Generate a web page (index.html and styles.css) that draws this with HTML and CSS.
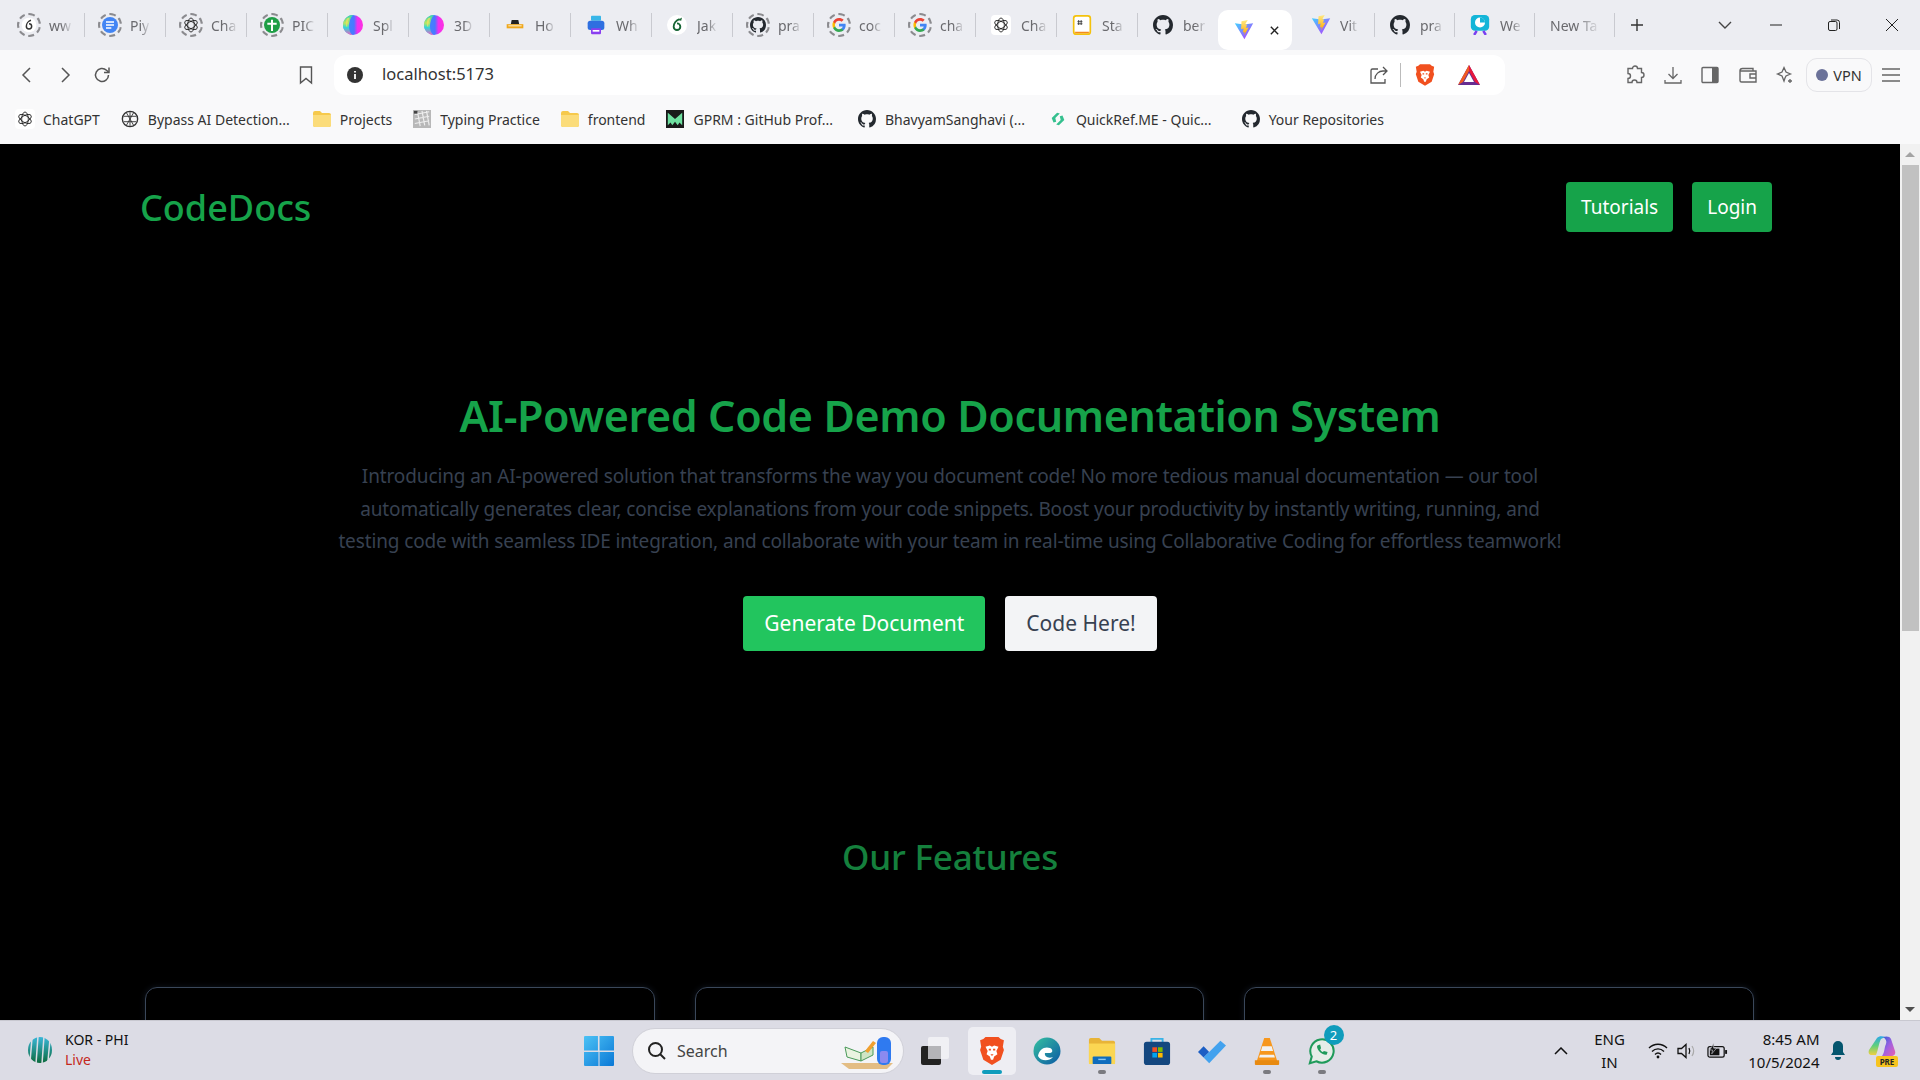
FILE: index.html
```html
<!DOCTYPE html>
<html lang="en">
<head>
    <meta charset="UTF-8">
    <title>CodeDocs</title>
    <link rel="stylesheet" href="styles.css">
</head>
<body>
    <!-- icon set -->
    <svg class="defs" width="0" height="0">
        <defs>
            <linearGradient id="viteBody" x1="0" y1="0" x2="1" y2="1"><stop offset="0" stop-color="#41d1ff"/><stop offset="1" stop-color="#bd34fe"/></linearGradient>
            <linearGradient id="viteBolt" x1="0" y1="0" x2="0" y2="1"><stop offset="0" stop-color="#ffea83"/><stop offset="1" stop-color="#ffa800"/></linearGradient>
            <linearGradient id="ballBase" x1="0" y1="0" x2="1" y2="0"><stop offset="0" stop-color="#3a8cff"/><stop offset=".55" stop-color="#4a78ff"/><stop offset=".72" stop-color="#f030f0"/><stop offset="1" stop-color="#ff30e0"/></linearGradient>
            <linearGradient id="ballLeft" x1="0" y1="0" x2="0" y2="1"><stop offset="0" stop-color="#30d8b0"/><stop offset=".4" stop-color="#b8e860"/><stop offset=".62" stop-color="#30d8d8"/><stop offset="1" stop-color="#f060c0"/></linearGradient>
            <linearGradient id="iccBall" x1="0" y1="0" x2="0" y2="1"><stop offset="0" stop-color="#39b6d8"/><stop offset="1" stop-color="#0c6b3e"/></linearGradient>
            <linearGradient id="winTile" x1="0" y1="0" x2="1" y2="1"><stop offset="0" stop-color="#4cc2f5"/><stop offset="1" stop-color="#0a78d6"/></linearGradient>
            <linearGradient id="edgeRing" x1="0" y1="0" x2="1" y2="1"><stop offset="0" stop-color="#35c1a0"/><stop offset="1" stop-color="#0c59a4"/></linearGradient>
            <linearGradient id="copLeft" x1="0" y1="0" x2="0" y2="1"><stop offset="0" stop-color="#2aa8e8"/><stop offset=".5" stop-color="#5fd07a"/><stop offset="1" stop-color="#f0d040"/></linearGradient>
            <linearGradient id="copRight" x1="0" y1="0" x2="1" y2="1"><stop offset="0" stop-color="#2a5fd8"/><stop offset=".5" stop-color="#a060e0"/><stop offset="1" stop-color="#e860b0"/></linearGradient>
            <symbol id="i-gh" viewBox="0 0 16 16"><path fill="#24292f" d="M8 0C3.58 0 0 3.58 0 8c0 3.54 2.29 6.53 5.47 7.59.4.07.55-.17.55-.38 0-.19-.01-.82-.01-1.49-2.01.37-2.53-.49-2.69-.94-.09-.23-.48-.94-.82-1.13-.28-.15-.68-.52-.01-.53.63-.01 1.08.58 1.23.82.72 1.21 1.87.87 2.33.66.07-.52.28-.87.51-1.07-1.78-.2-3.64-.89-3.64-3.95 0-.87.31-1.59.82-2.15-.08-.2-.36-1.02.08-2.12 0 0 .67-.21 2.2.82.64-.18 1.32-.27 2-.27s1.36.09 2 .27c1.53-1.04 2.2-.82 2.2-.82.44 1.1.16 1.92.08 2.12.51.56.82 1.27.82 2.15 0 3.07-1.87 3.75-3.65 3.95.29.25.54.73.54 1.48 0 1.07-.01 1.93-.01 2.2 0 .21.15.46.55.38A8.01 8.01 0 0 0 16 8c0-4.42-3.58-8-8-8z"/></symbol>
            <symbol id="i-g" viewBox="0 0 24 24"><path fill="#4285f4" d="M22 12.2c0-.7-.1-1.400-.2-2H12v3.900h5.600c-.2 1.300-1 2.400-2.100 3.100v2.600h3.400c2-1.800 3.100-4.500 3.100-7.600z"/><path fill="#34a853" d="M12 22.500c2.800 0 5.200-.9 6.900-2.600l-3.400-2.600c-.9.600-2.100 1-3.500 1-2.700 0-5-1.800-5.800-4.300H3.200v2.700c1.700 3.500 5.100 5.800 8.800 5.800z"/><path fill="#fbbc05" d="M6.200 14c-.4-1.300-.4-2.700 0-4V7.300H3.200c-1.400 2.800-1.400 6.600 0 9.400z"/><path fill="#ea4335" d="M12 5.700c1.500 0 2.900.5 4 1.500l3-3C17.200 2.500 14.700 1.500 12 1.500c-3.700 0-7.100 2.300-8.800 5.800l3 2.700c.8-2.500 3.100-4.300 5.800-4.300z"/></symbol>
            <symbol id="i-oai" viewBox="0 0 24 24"><g fill="none" stroke="#222" stroke-width="1.300"><ellipse cx="12" cy="12" rx="5" ry="10.500"/><ellipse cx="12" cy="12" rx="5" ry="10.500" transform="rotate(60 12 12)"/><ellipse cx="12" cy="12" rx="5" ry="10.500" transform="rotate(120 12 12)"/></g></symbol>
            <symbol id="i-vite" viewBox="0 0 24 24"><path fill="url(#viteBody)" d="M1 4l11 1.500L23 4 12.500 23z"/><path fill="url(#viteBolt)" d="M16.500 0L9 1.500 8.500 11l3-.7-.8 4.700 2.200-.6-.7 4 5.300-9.500-3 .6 1.100-4.500-2.300.4z"/></symbol>
            <symbol id="i-ball" viewBox="0 0 24 24"><circle cx="12" cy="12" r="12" fill="url(#ballBase)"/><path fill="url(#ballLeft)" d="M12 0C5.400 0 0 5.400 0 12s5 11.500 11 12C6 19 5.500 7 12 0z"/><path fill="#f8e060" opacity=".7" d="M5 4C2.500 8 3 13 5 15c0-4 1-8 3-12z"/></symbol>
            <symbol id="i-brave" viewBox="0 0 24 28"><path fill="#f1501f" d="M6 1h12l2 2 3 1-1 6 1 3-3 9-8 5-8-5-3-9 1-3-1-6 3-1z"/><path fill="#fff" d="M6 10l4-1 2 1 2-1 4 1-2 4 1 3-3 2-1 3h-2l-1-3-3-2 1-3z"/><path fill="#f1501f" d="M9 12h2v1.500H9zM13 12h2v1.500h-2zM10.500 17h3l-1.500 1.500z"/></symbol>
        </defs>
    </svg>

    <div class="tabstrip">
        <div class="tab"><span class="favicon ring"><svg class="glyph-s" viewBox="0 0 24 24"><circle cx="12" cy="12" r="11" fill="#fff"/><path d="M15 5c-4 1-7 5-7 9a4 4 0 1 0 4-4" fill="none" stroke="#333" stroke-width="2.200"/></svg></span><span class="tab-label">ww</span></div>
        <div class="tab"><span class="favicon ring"><svg class="glyph-s" viewBox="0 0 24 24"><circle cx="12" cy="12" r="12" fill="#4285f4"/><path d="M6 7.500h12M6 12h12M6 16.500h8" stroke="#fff" stroke-width="2"/></svg></span><span class="tab-label">Piy</span></div>
        <div class="tab"><span class="favicon ring"><svg class="glyph-s"><use href="#i-oai"/></svg></span><span class="tab-label">Cha</span></div>
        <div class="tab"><span class="favicon ring"><svg class="glyph-s" viewBox="0 0 24 24"><circle cx="12" cy="12" r="12" fill="#1e9e46"/><path d="M12 4v17M5 10h14" stroke="#fff" stroke-width="3"/></svg></span><span class="tab-label">PIC</span></div>
        <div class="tab"><span class="favicon"><svg class="glyph"><use href="#i-ball"/></svg></span><span class="tab-label">Spl</span></div>
        <div class="tab"><span class="favicon"><svg class="glyph"><use href="#i-ball"/></svg></span><span class="tab-label">3D</span></div>
        <div class="tab"><span class="favicon"><svg class="glyph" viewBox="0 0 24 24"><path d="M8 6h8l1 5H7z" fill="#222"/><path d="M2 11h20v5H2z" fill="#f0a81c"/><path d="M4 13h16" stroke="#fff" stroke-width="1"/></svg></span><span class="tab-label">Ho</span></div>
        <div class="tab"><span class="favicon"><svg class="glyph" viewBox="0 0 24 24"><rect x="6" y="1" width="12" height="6" rx="1" fill="#38b6e8"/><rect x="2" y="7" width="20" height="11" rx="3" fill="#2f6fe0"/><rect x="6" y="16" width="12" height="7" rx="1" fill="#8a3ff0"/><rect x="8" y="18" width="8" height="2" fill="#fff"/></svg></span><span class="tab-label">Wh</span></div>
        <div class="tab"><span class="favicon"><svg class="glyph" viewBox="0 0 24 24"><circle cx="12" cy="12" r="12" fill="#fff"/><path d="M15 5c-4 1-7 5-7 9a4 4 0 1 0 4-4" fill="none" stroke="#166534" stroke-width="2.200"/><path d="M13 6l5-3-1 4z" fill="#166534"/></svg></span><span class="tab-label">Jak</span></div>
        <div class="tab"><span class="favicon ring"><svg class="glyph-s"><use href="#i-gh"/></svg></span><span class="tab-label">pra</span></div>
        <div class="tab"><span class="favicon ring"><svg class="glyph-s"><use href="#i-g"/></svg></span><span class="tab-label">coc</span></div>
        <div class="tab"><span class="favicon ring"><svg class="glyph-s"><use href="#i-g"/></svg></span><span class="tab-label">cha</span></div>
        <div class="tab"><span class="favicon white"><svg><use href="#i-oai"/></svg></span><span class="tab-label">Cha</span></div>
        <div class="tab"><span class="favicon"><svg class="glyph" viewBox="0 0 24 24"><rect x="2" y="1" width="20" height="22" rx="3" fill="#fff" stroke="#f4c20d" stroke-width="2"/><path d="M3 20a3 3 0 0 0 2 2h14a3 3 0 0 0 2-2z" fill="#f48a1c"/><path d="M8 6v6M11 6v6M6.500 8h6M6.500 10.500h6" stroke="#333" stroke-width="1"/></svg></span><span class="tab-label">Sta</span></div>
        <div class="tab tab-last"><span class="favicon"><svg class="glyph"><use href="#i-gh"/></svg></span><span class="tab-label">ber</span></div>
        <div class="tab-active"><svg class="glyph"><use href="#i-vite"/></svg><svg class="tab-close" viewBox="0 0 12 12"><path d="M2 2l8 8M10 2l-8 8" stroke="#222" stroke-width="1.500"/></svg></div>
        <div class="tab tab-narrow"><span class="favicon"><svg class="glyph"><use href="#i-vite"/></svg></span><span class="tab-label">Vit</span></div>
        <div class="tab tab-narrow"><span class="favicon"><svg class="glyph"><use href="#i-gh"/></svg></span><span class="tab-label">pra</span></div>
        <div class="tab tab-narrow"><span class="favicon"><svg class="glyph" viewBox="0 0 24 24"><rect x="1" y="0" width="22" height="19" rx="5" fill="#13b5d8"/><circle cx="12" cy="9" r="6" fill="#fff"/><path d="M12 3v6h6a6 6 0 0 0-6-6z" fill="#13b5d8"/><path d="M8 19l-3 5M16 19l3 5" stroke="#7a3ff0" stroke-width="3"/></svg></span><span class="tab-label">We</span></div>
        <div class="tab tab-narrow tab-blank"><span class="tab-label">New Ta</span></div>
        <svg class="strip-plus" viewBox="0 0 14 14"><path d="M7 1v12M1 7h12" stroke="#333" stroke-width="1.400"/></svg>
        <svg class="strip-chevron" viewBox="0 0 14 8"><path d="M1 1l6 6 6-6" fill="none" stroke="#444" stroke-width="1.400"/></svg>
        <div class="win-controls">
            <svg viewBox="0 0 14 14"><path d="M1 7h12" stroke="#222"/></svg>
            <svg viewBox="0 0 14 14"><rect x="1.500" y="3.500" width="8.500" height="9" rx="1.500" fill="none" stroke="#222"/><path d="M4 2h6a2.500 2.500 0 0 1 2.500 2.500V11" fill="none" stroke="#222"/></svg>
            <svg viewBox="0 0 14 14"><path d="M1 1l12 12M13 1L1 13" stroke="#222"/></svg>
        </div>
    </div>

    <div class="toolbar">
        <svg class="tool tool-back" viewBox="0 0 20 20"><path d="M13 3l-7 7 7 7" fill="none" stroke="#555" stroke-width="1.500"/></svg>
        <svg class="tool tool-fwd" viewBox="0 0 20 20"><path d="M7 3l7 7-7 7" fill="none" stroke="#555" stroke-width="1.500"/></svg>
        <svg class="tool tool-reload" viewBox="0 0 20 20"><path d="M16.500 10a6.500 6.500 0 1 1-2-4.700L16.500 7" fill="none" stroke="#555" stroke-width="1.500"/><path d="M17 2.500V7.500h-5" fill="none" stroke="#555" stroke-width="1.500"/></svg>
        <svg class="tool tool-mark" viewBox="0 0 20 20"><path d="M4.500 2h11v16L10 13.500 4.500 18z" fill="none" stroke="#555" stroke-width="1.400"/></svg>
        <div class="address">
            <svg class="addr-info" viewBox="0 0 16 16"><circle cx="8" cy="8" r="8" fill="#333"/><path d="M8 7v5M8 4v1.600" stroke="#fff" stroke-width="1.800"/></svg>
            <span class="addr-url">localhost:5173</span>
            <svg class="addr-share" viewBox="0 0 20 20"><path d="M9 4H3.500A1.500 1.500 0 0 0 2 5.500V18h14v-4" fill="none" stroke="#555" stroke-width="1.300"/><path d="M6 14c0-5 4-8 8-8h4M14 2l4 4-4 4" fill="none" stroke="#555" stroke-width="1.300"/></svg>
            <span class="addr-sep"></span>
            <svg class="addr-brave"><use href="#i-brave"/></svg>
            <svg class="addr-bat" viewBox="0 0 24 22"><path d="M12 1L1 21h22z" fill="#662d91"/><path d="M12 1L1 21l5-3L12 7z" fill="#f15a22"/><path d="M12 1v6l6 11 5 3z" fill="#e8173c"/><path d="M12 9l-5 9h10z" fill="#fff"/></svg>
        </div>
        <div class="tool-group">
            <svg class="tool" viewBox="0 0 20 20"><path d="M7.500 3.500a2.500 2.500 0 0 1 5 0H16.500v4a2.500 2.500 0 0 1 0 5v5H12a2.500 2.500 0 0 0-5 0H3v-4a2.500 2.500 0 0 0 0-5v-5z" fill="none" stroke="#666" stroke-width="1.400"/></svg>
            <svg class="tool" viewBox="0 0 20 20"><path d="M10 2v11M5.500 9l4.500 4.500L14.500 9M2 15v3h16v-3" fill="none" stroke="#666" stroke-width="1.300"/></svg>
            <svg class="tool" viewBox="0 0 20 20"><rect x="2" y="2.500" width="16" height="15" rx="1" fill="none" stroke="#666" stroke-width="1.400"/><rect x="12" y="2.500" width="6" height="15" fill="#666"/></svg>
            <svg class="tool" viewBox="0 0 20 20"><path d="M2 6a2.500 2.500 0 0 1 2.500-2.500H15V6M2 6v9.500A1.500 1.500 0 0 0 3.500 17H18V6zM18 9h-6v4h6" fill="none" stroke="#666" stroke-width="1.400"/></svg>
            <svg class="tool" viewBox="0 0 20 20"><path d="M9 2.500l2 4.500 4.500 2-4.500 2-1 2-1 3-2-5-4.500-2L7 7zM15 14v4M13 16h4" fill="none" stroke="#666" stroke-width="1.300"/></svg>
        </div>
        <div class="vpn"><span class="vpn-dot"></span>VPN</div>
        <svg class="tool tool-menu" viewBox="0 0 20 20"><path d="M1 4h18M1 10h18M1 16h18" stroke="#666" stroke-width="1.300"/></svg>
    </div>

    <div class="bookmarks">
        <div class="bm bm-chat"><span class="bm-icon white"><svg><use href="#i-oai"/></svg></span>ChatGPT</div>
        <div class="bm bm-bypass"><span class="bm-icon"><svg viewBox="0 0 20 20"><circle cx="10" cy="10" r="8.500" fill="none" stroke="#333" stroke-width="1.500"/><path d="M10 2v16M3 7h14M3 13h14M6 3l8 14M14 3L6 17" stroke="#333"/></svg></span>Bypass AI Detection...</div>
        <div class="bm bm-projects"><span class="bm-icon"><svg class="folder" viewBox="0 0 20 18"><path d="M1 3a2 2 0 0 1 2-2h5l2 2h7a2 2 0 0 1 2 2v10a2 2 0 0 1-2 2H3a2 2 0 0 1-2-2z" fill="#f6c94c"/><path d="M1 5h18v10a2 2 0 0 1-2 2H3a2 2 0 0 1-2-2z" fill="#fbdc7a"/></svg></span>Projects</div>
        <div class="bm bm-typing"><span class="bm-icon"><svg viewBox="0 0 20 20"><rect width="20" height="20" fill="#b8b8b8"/><path d="M2 5l16-3M2 10l16-3M2 15l16-3M5 2l3 16M10 1l3 16M15 1l3 16" stroke="#eee" stroke-width="1.300"/><path d="M1 1h4v3H1z" fill="#444"/></svg></span>Typing Practice</div>
        <div class="bm bm-frontend"><span class="bm-icon"><svg class="folder" viewBox="0 0 20 18"><path d="M1 3a2 2 0 0 1 2-2h5l2 2h7a2 2 0 0 1 2 2v10a2 2 0 0 1-2 2H3a2 2 0 0 1-2-2z" fill="#f6c94c"/><path d="M1 5h18v10a2 2 0 0 1-2 2H3a2 2 0 0 1-2-2z" fill="#fbdc7a"/></svg></span>frontend</div>
        <div class="bm bm-gprm"><span class="bm-icon"><svg viewBox="0 0 20 20"><rect width="20" height="20" fill="#1a1a1a"/><path d="M2 3l8 7 8-7v14l-3-3-2 3-3-4-3 4-2-3-3 3z" fill="#6fe0a0"/></svg></span>GPRM : GitHub Prof...</div>
        <div class="bm bm-bhavyam"><span class="bm-icon"><svg><use href="#i-gh"/></svg></span>BhavyamSanghavi (...</div>
        <div class="bm bm-quick"><span class="bm-icon"><svg viewBox="0 0 20 20"><path d="M3 9l6-6 3 1-5 5 1 4-3 1zM17 11l-6 6-3-1 5-5-1-4 3-1z" fill="#35c08e"/></svg></span>QuickRef.ME - Quic...</div>
        <div class="bm bm-repos"><span class="bm-icon"><svg><use href="#i-gh"/></svg></span>Your Repositories</div>
    </div>

    <div class="viewport">
        <main class="page">
            <nav class="nav">
                <div class="logo">CodeDocs</div>
                <div class="nav-links">
                    <a class="nav-btn">Tutorials</a>
                    <a class="nav-btn">Login</a>
                </div>
            </nav>

            <section class="hero">
                <h1>AI-Powered Code Demo Documentation System</h1>
                <p>Introducing an AI-powered solution that transforms the way you document code! No more tedious manual documentation — our tool<br>automatically generates clear, concise explanations from your code snippets. Boost your productivity by instantly writing, running, and<br>testing code with seamless IDE integration, and collaborate with your team in real-time using Collaborative Coding for effortless teamwork!</p>
                <div class="hero-actions">
                    <a class="btn btn-green">Generate Document</a>
                    <a class="btn btn-light">Code Here!</a>
                </div>
            </section>

            <section class="features">
                <h2>Our Features</h2>
                <div class="feature-grid">
                    <div class="feature-card"></div>
                    <div class="feature-card"></div>
                    <div class="feature-card"></div>
                </div>
            </section>
        </main>
        <div class="scrollbar">
            <span class="arrow-up"></span>
            <div class="thumb"></div>
            <span class="arrow-down"></span>
        </div>
    </div>

    <footer class="taskbar">
        <div class="widget">
            <svg class="widget-icon" viewBox="0 0 28 32"><ellipse cx="14" cy="16" rx="12" ry="13" fill="url(#iccBall)"/><path d="M6 4l-2 24M12 2l-2 28M18 2l-2 28M24 5l-2 22" stroke="#dcdce5" stroke-width="1.500"/></svg>
            <div class="widget-text">
                <span>KOR - PHI</span>
                <span class="live">Live</span>
            </div>
        </div>
        <div class="task-center">
            <svg class="start" viewBox="0 0 28 28"><path fill="url(#winTile)" d="M0 1a1 1 0 0 1 1-1h12v13.500H0zM14.500 0H27a1 1 0 0 1 1 1v12.500H14.500zM0 15h13.500v13H1a1 1 0 0 1-1-1zM14.500 15H28v12a1 1 0 0 1-1 1H14.500z"/></svg>
            <div class="search">
                <svg class="search-icon" viewBox="0 0 20 20"><circle cx="8.500" cy="8.500" r="6.500" fill="none" stroke="#222" stroke-width="2"/><path d="M13 13l5 5" stroke="#222" stroke-width="2"/></svg>
                <span class="search-text">Search</span>
                <svg class="search-art" viewBox="0 0 58 36"><path d="M2 30h52l-6 6H10z" fill="#e3bd84"/><path d="M6 14l16 6v8L8 24z" fill="#e9f3e0" stroke="#4a9a5a"/><path d="M22 20l12-6v8l-12 6z" fill="#cfe5c4" stroke="#4a9a5a"/><path d="M26 18l8-10 3 2-8 10z" fill="#f0a030"/><rect x="38" y="4" width="14" height="28" rx="6" fill="#2f7af0"/><rect x="41" y="18" width="8" height="12" rx="2" fill="#8a8af0"/></svg>
            </div>
            <div class="task-app task-view"><svg viewBox="0 0 28 28"><rect x="0" y="9" width="20" height="19" rx="2" fill="#222"/><rect x="7" y="0" width="21" height="22" rx="2" fill="#f0f0f4"/><rect x="7" y="9" width="13" height="13" fill="#b4b4b8"/></svg></div>
            <div class="task-app task-active"><svg class="task-brave"><use href="#i-brave"/></svg><i class="pip pip-on"></i></div>
            <div class="task-app"><svg viewBox="0 0 28 28"><circle cx="14" cy="14" r="13.500" fill="url(#edgeRing)"/><path d="M5 19c1-7 7-10 12-8 3 1 3 5 0 5h-5c-1 3 3 6 8 4-4 5-13 4-15-1z" fill="#fff"/></svg></div>
            <div class="task-app"><svg viewBox="0 0 30 28"><path d="M1 2a2 2 0 0 1 2-2h9l3 3h12a2 2 0 0 1 2 2v21H1z" fill="#e8b437"/><path d="M1 6h28v22H1z" fill="#fbd652"/><rect x="5" y="20" width="20" height="8" rx="1" fill="#0f6cbd"/><path d="M11 23h8" stroke="#8cc8f0" stroke-width="1.500"/></svg><i class="pip"></i></div>
            <div class="task-app"><svg viewBox="0 0 28 30"><path d="M8 6V2h12v4" fill="none" stroke="#39b3e6" stroke-width="2"/><rect y="5" width="28" height="25" rx="3" fill="#14477f"/><path d="M9 11h5v5H9z" fill="#f25022"/><path d="M15 11h5v5h-5z" fill="#7fba00"/><path d="M9 17h5v5H9z" fill="#00a4ef"/><path d="M15 17h5v5h-5z" fill="#ffb900"/></svg></div>
            <div class="task-app"><svg viewBox="0 0 30 26"><path d="M0 14l6-6 6 6-6 6z" fill="#1c5ec4"/><path d="M6 20l6-6L24 2l6 5-18 19z" fill="#43a2ee"/></svg></div>
            <div class="task-app"><svg viewBox="0 0 26 30"><path d="M10 1h6l8 25H2z" fill="#f7971d"/><path d="M8 10h10l1.500 5h-13zM5.500 19h15l1 3h-17z" fill="#f2f2f2"/><path d="M0 25h26v4a1 1 0 0 1-1 1H1a1 1 0 0 1-1-1z" fill="#e88a10"/></svg><i class="pip"></i></div>
            <div class="task-app task-whats"><svg viewBox="0 0 30 30"><path d="M2 28l2-7a12.500 12.500 0 1 1 5 5z" fill="#e6ede8" stroke="#1e9a5a" stroke-width="2.200"/><path d="M10 9c-2 3 5 11 10 10l1-3-4-1-1 1c-1 0-3-2-3-3l1-1-1-4z" fill="#1e9a5a"/></svg><span class="badge">2</span><i class="pip"></i></div>
        </div>
        <div class="tray">
            <svg class="tray-caret" viewBox="0 0 14 8"><path d="M1 7l6-6 6 6" fill="none" stroke="#111" stroke-width="1.500"/></svg>
            <div class="tray-lang"><span>ENG</span><span>IN</span></div>
            <svg class="tray-wifi" viewBox="0 0 20 16"><path d="M1 5c5-5 13-5 18 0M4 8.500c3.500-3.500 8.500-3.500 12 0M7 11.500c2-2 4-2 6 0" fill="none" stroke="#111" stroke-width="1.400"/><circle cx="10" cy="14" r="1.400" fill="#111"/></svg>
            <svg class="tray-sound" viewBox="0 0 20 16"><path d="M1 5.500h3.500L9 1.500v13l-4.500-4H1z" fill="none" stroke="#111" stroke-width="1.300"/><path d="M12 5c1 2 1 4 0 6" fill="none" stroke="#111" stroke-width="1.200"/><path d="M15 3c2 3 2 7 0 10" fill="none" stroke="#aaa" stroke-width="1.200"/></svg>
            <svg class="tray-batt" viewBox="0 0 22 16"><rect x="1" y="3.500" width="17" height="11" rx="2" fill="none" stroke="#111" stroke-width="1.300"/><rect x="3" y="5.500" width="10" height="7" fill="#111"/><path d="M19 7h2v4h-2z" fill="#111"/><path d="M7 0L3 7h3l-1 4 5-6H7z" fill="#111" stroke="#dcdce5" stroke-width=".6"/></svg>
            <div class="tray-clock"><span>8:45 AM</span><span>10/5/2024</span></div>
            <svg class="tray-bell" viewBox="0 0 16 20"><path d="M8 0a5 5 0 0 1 5 5v6l2 3H1l2-3V5a5 5 0 0 1 5-5z" fill="#05566e"/><path d="M5 16h6a3 3 0 0 1-6 0z" fill="#05566e"/></svg>
            <svg class="tray-copilot" viewBox="0 0 30 32"><path d="M9 3c2-2 5-2 8-1l-4 2c-2 3-3 12-5 16H4c-3 0-4-2-3-5z" fill="url(#copLeft)"/><path d="M15 2c3-1 7-1 8 2l4 12c1 3-1 5-4 5h-9c3-4 2-8 4-12 1-3 0-5-3-7z" fill="url(#copRight)"/><rect x="8" y="21" width="22" height="11" rx="2" fill="#f7c41f"/><text x="19" y="29.500" class="pre-text" text-anchor="middle">PRE</text></svg>
        </div>
    </footer>
</body>
</html>
```
FILE: styles.css
```css
* {
    box-sizing: border-box;
}
html, body {
    margin: 0;
    padding: 0;
    height: 100%;
}
body {
    width: 1920px;
    height: 1080px;
    overflow: hidden;
    display: flex;
    flex-direction: column;
    font-family: "Noto Sans", "Open Sans", sans-serif;
    background: #000;
}
.defs {
    position: absolute;
}

/* tab strip */
.tabstrip {
    height: 50px;
    flex: none;
    display: flex;
    align-items: center;
    padding-left: 4px;
    background: #ecedf2;
}
.tab {
    width: 81px;
    height: 24px;
    flex: none;
    display: flex;
    align-items: center;
    gap: 8px;
    padding-left: 13px;
    border-right: 1px solid #c9cad0;
}
.tab-last {
    border-right: none;
}
.tab-narrow {
    width: 80px;
}
.favicon {
    width: 24px;
    height: 24px;
    flex: none;
    display: flex;
    align-items: center;
    justify-content: center;
    border-radius: 50%;
}
.favicon.ring {
    border: 2px dashed #8b8b8f;
}
.favicon.white svg {
    width: 20px;
    height: 20px;
    padding: 2px;
    background: #fff;
    border-radius: 4px;
}
.glyph {
    width: 20px;
    height: 20px;
    flex: none;
}
.glyph-s {
    width: 16px;
    height: 16px;
    flex: none;
}
.tab-label {
    white-space: nowrap;
    font-size: 14px;
    color: #6a6a6e;
    -webkit-mask-image: linear-gradient(to right, #000 55%, rgba(0,0,0,.15));
    mask-image: linear-gradient(to right, #000 55%, rgba(0,0,0,.15));
}
.tab-active {
    width: 74px;
    height: 40px;
    flex: none;
    margin: 10px 3px 0 -1px;
    align-self: flex-start;
    padding-left: 16px;
    display: flex;
    align-items: center;
    gap: 15px;
    background: #fff;
    border-radius: 10px;
}
.tab-active + .tab {
    padding-left: 14px;
    gap: 7px;
}
.tab-close {
    width: 11px;
    height: 11px;
}
.tab-blank {
    padding-left: 15px;
}
.strip-plus {
    width: 14px;
    height: 14px;
    margin-left: 15px;
}
.strip-chevron {
    width: 14px;
    height: 8px;
    margin-left: 74px;
}
.win-controls {
    display: flex;
    gap: 44px;
    margin-left: 37px;
}
.win-controls svg {
    width: 14px;
    height: 14px;
}

/* toolbar */
.toolbar {
    height: 50px;
    flex: none;
    display: flex;
    align-items: center;
    background: #f9f9fa;
}
.tool {
    width: 20px;
    height: 20px;
    flex: none;
}
.tool-back {
    margin-left: 17px;
}
.tool-fwd {
    margin-left: 18px;
}
.tool-reload {
    margin-left: 17px;
}
.tool-mark {
    margin-left: 184px;
}
.address {
    width: 1171px;
    height: 40px;
    margin-left: 18px;
    display: flex;
    align-items: center;
    background: #fff;
    border-radius: 12px;
}
.addr-info {
    width: 16px;
    height: 16px;
    margin-left: 13px;
}
.addr-url {
    margin-left: 19px;
    font-size: 16.5px;
    line-height: 20px;
    margin-top: -2px;
    color: #333;
}
.addr-share {
    width: 20px;
    height: 20px;
    margin-left: auto;
}
.addr-sep {
    width: 1px;
    height: 24px;
    margin-left: 11px;
    background: #bbb;
}
.addr-brave {
    width: 20px;
    height: 24px;
    margin-left: 14px;
}
.addr-bat {
    width: 24px;
    height: 22px;
    margin-left: 22px;
    margin-right: 24px;
}
.tool-group {
    display: flex;
    gap: 17.5px;
    margin-left: 120px;
}
.vpn {
    width: 66px;
    height: 34px;
    margin-left: 11px;
    display: flex;
    align-items: center;
    justify-content: center;
    gap: 5px;
    font-size: 14.5px;
    color: #333;
    border: 1px solid #e4e4e8;
    border-radius: 11px;
}
.vpn-dot {
    width: 12px;
    height: 12px;
    border-radius: 50%;
    background: #6b7299;
}
.tool-menu {
    margin-left: 9px;
}

/* bookmarks */
.bookmarks {
    height: 44px;
    flex: none;
    display: flex;
    align-items: center;
    padding: 0 0 6px 15px;
    background: #f9f9fa;
    font-size: 14px;
    color: #333;
}
.bm {
    display: flex;
    align-items: center;
    gap: 8px;
    white-space: nowrap;
}
.bm-icon {
    width: 20px;
    height: 20px;
    flex: none;
    display: flex;
    align-items: center;
    justify-content: center;
}
.bm-icon svg {
    width: 18px;
    height: 18px;
}
.bm-icon.white {
    background: #fff;
    border-radius: 4px;
}
.bm-icon.white svg {
    width: 16px;
    height: 16px;
}
.bm-icon .folder {
    width: 20px;
}
.bm-bypass { margin-left: 20px; }
.bm-projects { margin-left: 22px; }
.bm-typing { margin-left: 20px; }
.bm-frontend { margin-left: 20px; }
.bm-gprm { margin-left: 20px; }
.bm-bhavyam { margin-left: 24px; }
.bm-quick { margin-left: 23px; }
.bm-repos { margin-left: 29px; }

/* page */
.viewport {
    flex: 1;
    min-height: 0;
    display: flex;
    overflow: hidden;
}
.page {
    width: 1900px;
    flex: none;
    background: #000;
    overflow: hidden;
}
.nav {
    display: flex;
    align-items: center;
    justify-content: space-between;
    padding: 37px 128px 0 140px;
}
.logo {
    margin-top: 2px;
    font-size: 36px;
    font-weight: 500;
    color: #16a34a;
}
.nav-links {
    display: flex;
    gap: 19px;
}
.nav-btn {
    height: 50px;
    padding: 0 15px;
    display: flex;
    align-items: center;
    font-size: 19px;
    color: #fff;
    background: #16a34a;
    border-radius: 4px;
}
.hero {
    margin-top: 154px;
    text-align: center;
}
.hero h1 {
    margin: 0;
    font-size: 43px;
    letter-spacing: -0.37px;
    font-weight: 600;
    line-height: 60px;
    color: #16a34a;
}
.hero p {
    margin: 14px 0 0;
    font-size: 19px;
    letter-spacing: -0.125px;
    line-height: 32.5px;
    color: #374151;
}
.hero-actions {
    margin-top: 38px;
    display: flex;
    justify-content: center;
    gap: 20px;
}
.btn {
    height: 55px;
    display: flex;
    align-items: center;
    padding: 0 21px;
    font-size: 21px;
    border-radius: 4px;
}
.btn-green {
    color: #fff;
    background: #22c55e;
}
.btn-light {
    color: #374151;
    background: #f3f4f6;
}
.features {
    margin-top: 181px;
    text-align: center;
}
.features h2 {
    margin: 0;
    font-size: 35px;
    letter-spacing: -0.2px;
    font-weight: 500;
    line-height: 50px;
    color: #15803d;
}
.feature-grid {
    margin-top: 105px;
    padding: 0 146px 0 145px;
    display: grid;
    grid-template-columns: repeat(3, 1fr);
    gap: 40px;
}
.feature-card {
    height: 300px;
    border: 1px solid #3a475a;
    border-radius: 12px;
    box-shadow: 0 0 6px rgba(30, 41, 59, .5);
}

/* scrollbar */
.scrollbar {
    width: 20px;
    flex: none;
    background: #f1f1f1;
    display: flex;
    flex-direction: column;
    align-items: center;
}
.arrow-up, .arrow-down {
    width: 0;
    height: 0;
    border-left: 5px solid transparent;
    border-right: 5px solid transparent;
}
.arrow-up {
    margin-top: 8px;
    border-bottom: 5px solid #a3a3a3;
}
.arrow-down {
    margin-top: auto;
    margin-bottom: 8px;
    border-top: 5px solid #505050;
}
.thumb {
    width: 17px;
    height: 466px;
    margin-top: 8px;
    background: #c1c1c1;
}

/* taskbar */
.taskbar {
    height: 60px;
    flex: none;
    display: flex;
    align-items: center;
    background: #dcdce5;
    border-top: 1px solid #c8c8d0;
    color: #111;
    font-size: 14px;
}
.widget {
    width: 584px;
    flex: none;
    display: flex;
    align-items: center;
    gap: 11px;
    padding: 0 0 2px 26px;
}
.widget-icon {
    width: 28px;
    height: 32px;
}
.widget-text {
    display: flex;
    flex-direction: column;
    line-height: 20px;
}
.live {
    color: #c4281c;
}
.task-center {
    display: flex;
    align-items: center;
}
.start {
    width: 30px;
    height: 30px;
    flex: none;
}
.search {
    width: 272px;
    height: 46px;
    margin-left: 18px;
    display: flex;
    align-items: center;
    padding-left: 14px;
    background: #f4f4f7;
    border: 1px solid #d0d0d8;
    border-radius: 23px;
}
.search-icon {
    width: 20px;
    height: 20px;
}
.search-text {
    margin-left: 10px;
    font-size: 16px;
    color: #444;
}
.search-art {
    width: 58px;
    height: 36px;
    margin-left: auto;
    margin-right: 6px;
}
.task-app {
    width: 48px;
    height: 48px;
    margin-left: 7px;
    flex: none;
    position: relative;
    display: flex;
    align-items: center;
    justify-content: center;
    border-radius: 5px;
}
.task-app svg {
    width: 28px;
    height: 28px;
}
.task-view {
    margin-left: 7px;
}
.task-active {
    margin-left: 8.5px;
    background: #eeeef3;
}
.task-app .task-brave {
    width: 26px;
    height: 32px;
}
.pip {
    position: absolute;
    left: 50%;
    bottom: 1px;
    width: 8px;
    height: 4px;
    margin-left: -4px;
    border-radius: 2px;
    background: #7a7a80;
}
.pip-on {
    width: 20px;
    margin-left: -10px;
    background: #0f9cbc;
}
.badge {
    position: absolute;
    top: -2px;
    right: 2px;
    width: 20px;
    height: 20px;
    display: flex;
    align-items: center;
    justify-content: center;
    border-radius: 50%;
    background: #0f9cbc;
    color: #fff;
    font-size: 13px;
}
.tray {
    display: flex;
    align-items: center;
    margin-left: 208px;
}
.tray-caret {
    width: 14px;
    height: 8px;
}
.tray-lang {
    width: 40px;
    margin-left: 22px;
    display: flex;
    flex-direction: column;
    align-items: center;
    line-height: 23px;
    font-size: 15px;
}
.tray-wifi {
    width: 20px;
    height: 16px;
    margin-left: 18px;
}
.tray-sound {
    width: 20px;
    height: 16px;
    margin-left: 9px;
}
.tray-batt {
    width: 21px;
    height: 16px;
    margin-left: 10px;
}
.tray-clock {
    width: 82px;
    margin-left: 10px;
    display: flex;
    flex-direction: column;
    align-items: flex-end;
    line-height: 23px;
    font-size: 15px;
}
.tray-bell {
    width: 16px;
    height: 20px;
    margin-left: 10px;
}
.tray-copilot {
    width: 30px;
    height: 32px;
    margin-left: 22px;
}
.pre-text {
    font-family: "Noto Sans", sans-serif;
    font-size: 8px;
    font-weight: 700;
    fill: #222;
}
```
